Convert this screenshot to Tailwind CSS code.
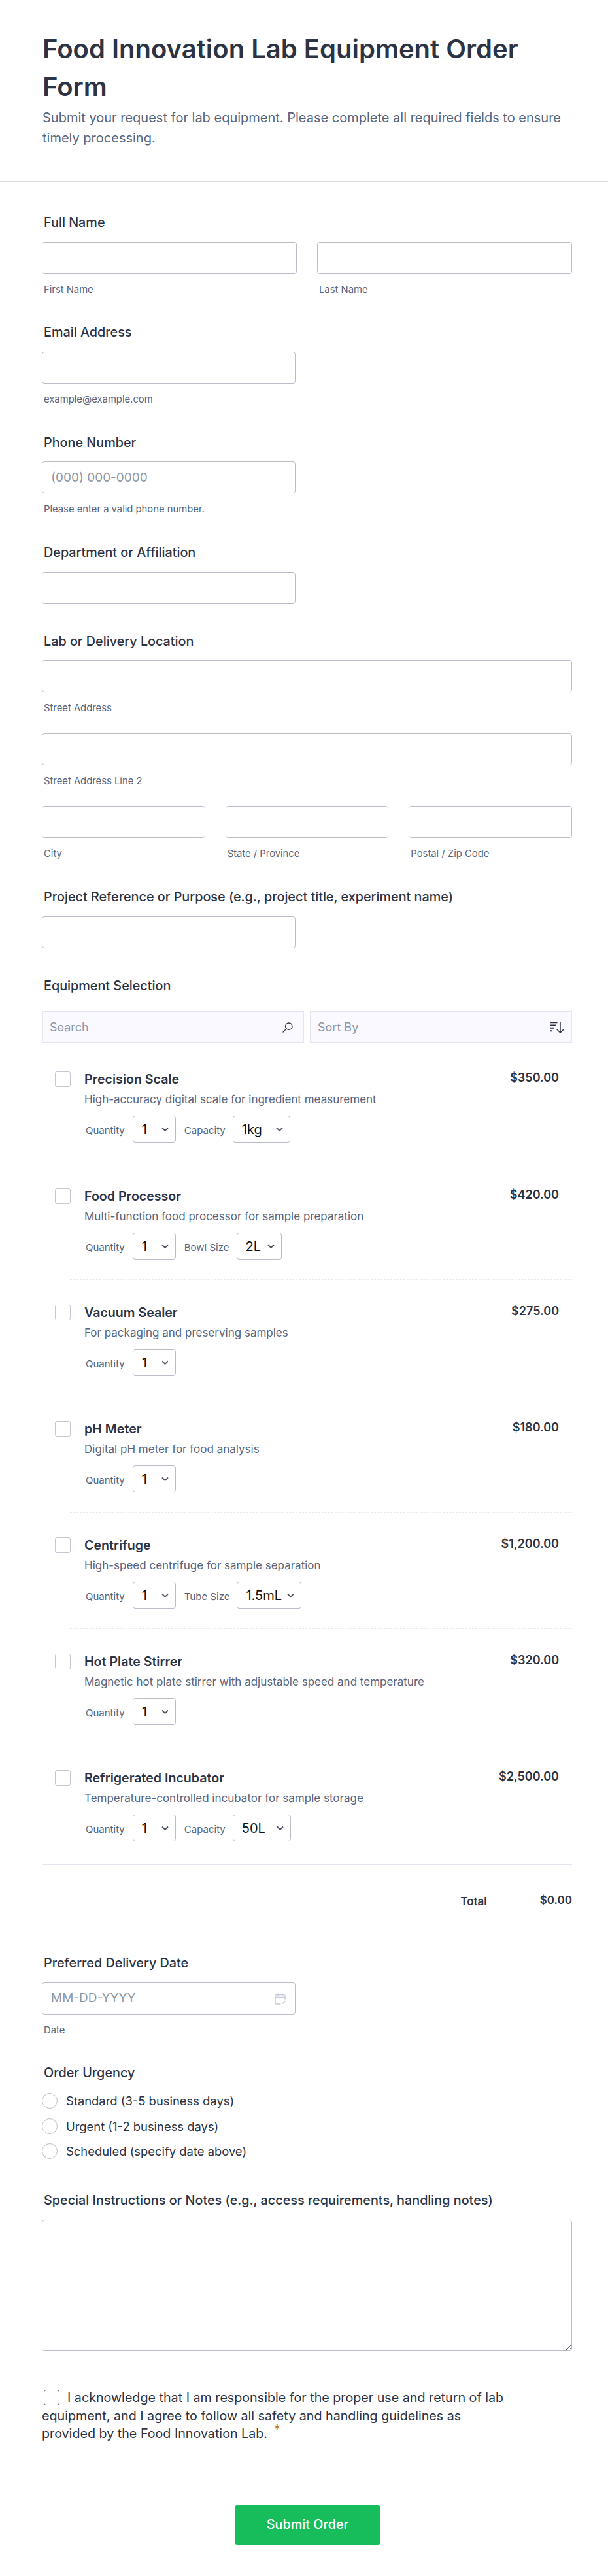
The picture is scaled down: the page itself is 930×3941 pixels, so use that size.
<!DOCTYPE html>
<html lang="en">
<head>
    <meta charset="UTF-8">
    <meta name="viewport" content="width=device-width, initial-scale=1.0">
    <title>Food Innovation Lab Equipment Order Form</title>
    <script src="https://cdn.jsdelivr.net/npm/@tailwindcss/browser@4"></script>
</head>
<body class="bg-white font-['Inter',sans-serif] text-[#2c3345]">
    <!-- Header -->
    <header class="h-[278px] border-b border-[#d8dae9] pl-[65px] pr-[60px] pt-[46px]">
        <h1 class="text-[40px] leading-[58px] font-semibold">Food Innovation Lab Equipment Order Form</h1>
        <p class="mt-[3px] text-[20px] leading-[31px] text-[#57647e]">Submit your request for lab equipment. Please complete all required fields to ensure timely processing.</p>
    </header>

    <main class="pl-[64px] pr-[55px]">
        <!-- Full Name -->
        <section class="h-[196px] pt-[50px]">
            <h2 class="ml-[3px] h-[24px] text-[19.8px] leading-[24px] font-medium">Full Name</h2>
            <div class="mt-[18px] grid grid-cols-2 gap-[31px]">
                <div>
                    <input class="block h-[49px] w-full rounded-[4px] border border-[#b8bdc9] bg-white">
                    <p class="ml-[3px] mt-[15px] text-[14.8px] leading-[18px] text-[#57647e]">First Name</p>
                </div>
                <div>
                    <input class="block h-[49px] w-full rounded-[4px] border border-[#b8bdc9] bg-white">
                    <p class="ml-[3px] mt-[15px] text-[14.8px] leading-[18px] text-[#57647e]">Last Name</p>
                </div>
            </div>
        </section>

        <!-- Email -->
        <section class="h-[168px] pt-[22px]">
            <h2 class="ml-[3px] h-[24px] text-[19.8px] leading-[24px] font-medium">Email Address</h2>
            <input class="mt-[18px] block h-[49px] w-[388px] rounded-[4px] border border-[#b8bdc9] bg-white">
            <p class="ml-[3px] mt-[15px] text-[14.8px] leading-[18px] text-[#57647e]">example@example.com</p>
        </section>

        <!-- Phone -->
        <section class="h-[168px] pt-[23px]">
            <h2 class="ml-[3px] h-[24px] text-[19.8px] leading-[24px] font-medium">Phone Number</h2>
            <input placeholder="(000) 000-0000" class="mt-[17px] block h-[49px] w-[388px] rounded-[4px] border border-[#b8bdc9] bg-white px-[13px] text-[19px] placeholder:text-[#8d97a8]">
            <p class="ml-[3px] mt-[15px] text-[14.8px] leading-[18px] text-[#57647e]">Please enter a valid phone number.</p>
        </section>

        <!-- Department -->
        <section class="h-[136px] pt-[23px]">
            <h2 class="ml-[3px] h-[24px] text-[19.8px] leading-[24px] font-medium">Department or Affiliation</h2>
            <input class="mt-[18px] block h-[49px] w-[388px] rounded-[4px] border border-[#b8bdc9] bg-white">
        </section>

        <!-- Location -->
        <section class="h-[391px] pt-[23px]">
            <h2 class="ml-[3px] h-[24px] text-[19.8px] leading-[24px] font-medium">Lab or Delivery Location</h2>
            <input class="mt-[17px] block h-[49px] w-full rounded-[4px] border border-[#b8bdc9] bg-white">
            <p class="ml-[3px] mt-[15px] text-[14.8px] leading-[18px] text-[#57647e]">Street Address</p>
            <input class="mt-[30px] block h-[49px] w-full rounded-[4px] border border-[#b8bdc9] bg-white">
            <p class="ml-[3px] mt-[15px] text-[14.8px] leading-[18px] text-[#57647e]">Street Address Line 2</p>
            <div class="mt-[29px] grid grid-cols-3 gap-[31px]">
                <div>
                    <input class="block h-[49px] w-full rounded-[4px] border border-[#b8bdc9] bg-white">
                    <p class="ml-[3px] mt-[15px] text-[14.8px] leading-[18px] text-[#57647e]">City</p>
                </div>
                <div>
                    <input class="block h-[49px] w-full rounded-[4px] border border-[#b8bdc9] bg-white">
                    <p class="ml-[3px] mt-[15px] text-[14.8px] leading-[18px] text-[#57647e]">State / Province</p>
                </div>
                <div>
                    <input class="block h-[49px] w-full rounded-[4px] border border-[#b8bdc9] bg-white">
                    <p class="ml-[3px] mt-[15px] text-[14.8px] leading-[18px] text-[#57647e]">Postal / Zip Code</p>
                </div>
            </div>
        </section>

        <!-- Project -->
        <section class="h-[136px] pt-[23px]">
            <h2 class="ml-[3px] h-[24px] text-[19.8px] leading-[24px] font-medium">Project Reference or Purpose (e.g., project title, experiment name)</h2>
            <input class="mt-[18px] block h-[49px] w-[388px] rounded-[4px] border border-[#b8bdc9] bg-white">
        </section>

        <!-- Equipment -->
        <section class="pt-[23px]">
            <h2 class="ml-[3px] h-[24px] text-[19.8px] leading-[24px] font-medium">Equipment Selection</h2>
            <div class="mt-[27px] grid grid-cols-2 gap-[9px]">
                <div class="flex h-[49px] items-center justify-between border-2 border-[#e3e5f0] bg-[#f9f9ff] pl-[10px] pr-[15px]">
                    <span class="text-[18px] text-[#8d97a8]">Search</span>
                    <svg class="h-[16px] w-[16px]" viewBox="0 0 16 16" fill="none" stroke="#2c3345" stroke-width="1.3" stroke-linecap="round"><circle cx="9.8" cy="6.2" r="5.2"/><path d="M6 10L1 15"/></svg>
                </div>
                <div class="flex h-[49px] items-center justify-between border-2 border-[#e3e5f0] bg-[#f9f9ff] pl-[10px] pr-[11px]">
                    <span class="text-[18px] text-[#8d97a8]">Sort By</span>
                    <svg class="h-[18px] w-[20px]" viewBox="0 0 20 18" fill="none" stroke="#2c3345"><path d="M0 1.2H10.5M0 5.5H8M0 9.8H5M0 14.2H2.5" stroke-width="2"/><path d="M15 1V17M10 12L15 17L20 12" stroke-width="1.5" stroke-linecap="round" stroke-linejoin="round"/></svg>
                </div>
            </div>

            <!-- Products -->
            <div class="mt-[5px]">
                <div class="h-[178px] pl-[20px] pr-[20px] pt-[38px]">
                    <div class="flex">
                        <span class="h-[24px] w-[24px] shrink-0 rounded-[3px] border border-[#c3c8d4]"></span>
                        <div class="ml-[21px] flex-1">
                            <div class="flex justify-between"><span class="text-[19.6px] leading-[24px] font-semibold">Precision Scale</span><span class="-mt-[2px] text-[18px] leading-[24px] font-semibold">$350.00</span></div>
                            <p class="mt-[7px] text-[17px] leading-[24px] text-[#57647e]">High-accuracy digital scale for ingredient measurement</p>
                            <div class="mt-[13px] flex items-center text-[15px] text-[#57647e]">
                                <span class="ml-[2px] mt-[5px]">Quantity</span>
                                <span class="ml-[12px] flex h-[41px] w-[66px] items-center justify-between rounded-[4px] border border-[#b8bdc9] pl-[13px] pr-[10px] text-[20px] text-[#111]">1<svg class="h-[8px] w-[11px]" viewBox="0 0 11 8" fill="none" stroke="#4b5563" stroke-width="1.8"><path d="M1 1.5L5.5 6L10 1.5"/></svg></span>
                                <span class="ml-[13px] mt-[5px]">Capacity</span>
                                <span class="ml-[11px] flex h-[41px] w-[88px] items-center justify-between rounded-[4px] border border-[#b8bdc9] pl-[13px] pr-[10px] text-[20px] text-[#111]">1kg<svg class="h-[8px] w-[11px]" viewBox="0 0 11 8" fill="none" stroke="#4b5563" stroke-width="1.8"><path d="M1 1.5L5.5 6L10 1.5"/></svg></span>
                            </div>
                        </div>
                    </div>
                </div>
                <div class="ml-[43px] border-t border-dashed border-[#e8eaf3]"></div>
                <div class="h-[177px] pl-[20px] pr-[20px] pt-[38px]">
                    <div class="flex">
                        <span class="h-[24px] w-[24px] shrink-0 rounded-[3px] border border-[#c3c8d4]"></span>
                        <div class="ml-[21px] flex-1">
                            <div class="flex justify-between"><span class="text-[19.6px] leading-[24px] font-semibold">Food Processor</span><span class="-mt-[2px] text-[18px] leading-[24px] font-semibold">$420.00</span></div>
                            <p class="mt-[7px] text-[17px] leading-[24px] text-[#57647e]">Multi-function food processor for sample preparation</p>
                            <div class="mt-[13px] flex items-center text-[15px] text-[#57647e]">
                                <span class="ml-[2px] mt-[5px]">Quantity</span>
                                <span class="ml-[12px] flex h-[41px] w-[66px] items-center justify-between rounded-[4px] border border-[#b8bdc9] pl-[13px] pr-[10px] text-[20px] text-[#111]">1<svg class="h-[8px] w-[11px]" viewBox="0 0 11 8" fill="none" stroke="#4b5563" stroke-width="1.8"><path d="M1 1.5L5.5 6L10 1.5"/></svg></span>
                                <span class="ml-[13px] mt-[5px]">Bowl Size</span>
                                <span class="ml-[11px] flex h-[41px] w-[69px] items-center justify-between rounded-[4px] border border-[#b8bdc9] pl-[13px] pr-[10px] text-[20px] text-[#111]">2L<svg class="h-[8px] w-[11px]" viewBox="0 0 11 8" fill="none" stroke="#4b5563" stroke-width="1.8"><path d="M1 1.5L5.5 6L10 1.5"/></svg></span>
                            </div>
                        </div>
                    </div>
                </div>
                <div class="ml-[43px] border-t border-dashed border-[#e8eaf3]"></div>
                <div class="h-[177px] pl-[20px] pr-[20px] pt-[38px]">
                    <div class="flex">
                        <span class="h-[24px] w-[24px] shrink-0 rounded-[3px] border border-[#c3c8d4]"></span>
                        <div class="ml-[21px] flex-1">
                            <div class="flex justify-between"><span class="text-[19.6px] leading-[24px] font-semibold">Vacuum Sealer</span><span class="-mt-[2px] text-[18px] leading-[24px] font-semibold">$275.00</span></div>
                            <p class="mt-[7px] text-[17px] leading-[24px] text-[#57647e]">For packaging and preserving samples</p>
                            <div class="mt-[13px] flex items-center text-[15px] text-[#57647e]">
                                <span class="ml-[2px] mt-[5px]">Quantity</span>
                                <span class="ml-[12px] flex h-[41px] w-[66px] items-center justify-between rounded-[4px] border border-[#b8bdc9] pl-[13px] pr-[10px] text-[20px] text-[#111]">1<svg class="h-[8px] w-[11px]" viewBox="0 0 11 8" fill="none" stroke="#4b5563" stroke-width="1.8"><path d="M1 1.5L5.5 6L10 1.5"/></svg></span>
                            </div>
                        </div>
                    </div>
                </div>
                <div class="ml-[43px] border-t border-dashed border-[#e8eaf3]"></div>
                <div class="h-[177px] pl-[20px] pr-[20px] pt-[38px]">
                    <div class="flex">
                        <span class="h-[24px] w-[24px] shrink-0 rounded-[3px] border border-[#c3c8d4]"></span>
                        <div class="ml-[21px] flex-1">
                            <div class="flex justify-between"><span class="text-[19.6px] leading-[24px] font-semibold">pH Meter</span><span class="-mt-[2px] text-[18px] leading-[24px] font-semibold">$180.00</span></div>
                            <p class="mt-[7px] text-[17px] leading-[24px] text-[#57647e]">Digital pH meter for food analysis</p>
                            <div class="mt-[13px] flex items-center text-[15px] text-[#57647e]">
                                <span class="ml-[2px] mt-[5px]">Quantity</span>
                                <span class="ml-[12px] flex h-[41px] w-[66px] items-center justify-between rounded-[4px] border border-[#b8bdc9] pl-[13px] pr-[10px] text-[20px] text-[#111]">1<svg class="h-[8px] w-[11px]" viewBox="0 0 11 8" fill="none" stroke="#4b5563" stroke-width="1.8"><path d="M1 1.5L5.5 6L10 1.5"/></svg></span>
                            </div>
                        </div>
                    </div>
                </div>
                <div class="ml-[43px] border-t border-dashed border-[#e8eaf3]"></div>
                <div class="h-[177px] pl-[20px] pr-[20px] pt-[38px]">
                    <div class="flex">
                        <span class="h-[24px] w-[24px] shrink-0 rounded-[3px] border border-[#c3c8d4]"></span>
                        <div class="ml-[21px] flex-1">
                            <div class="flex justify-between"><span class="text-[19.6px] leading-[24px] font-semibold">Centrifuge</span><span class="-mt-[2px] text-[18px] leading-[24px] font-semibold">$1,200.00</span></div>
                            <p class="mt-[7px] text-[17px] leading-[24px] text-[#57647e]">High-speed centrifuge for sample separation</p>
                            <div class="mt-[13px] flex items-center text-[15px] text-[#57647e]">
                                <span class="ml-[2px] mt-[5px]">Quantity</span>
                                <span class="ml-[12px] flex h-[41px] w-[66px] items-center justify-between rounded-[4px] border border-[#b8bdc9] pl-[13px] pr-[10px] text-[20px] text-[#111]">1<svg class="h-[8px] w-[11px]" viewBox="0 0 11 8" fill="none" stroke="#4b5563" stroke-width="1.8"><path d="M1 1.5L5.5 6L10 1.5"/></svg></span>
                                <span class="ml-[13px] mt-[5px]">Tube Size</span>
                                <span class="ml-[11px] flex h-[41px] w-[99px] items-center justify-between rounded-[4px] border border-[#b8bdc9] pl-[13px] pr-[10px] text-[20px] text-[#111]">1.5mL<svg class="h-[8px] w-[11px]" viewBox="0 0 11 8" fill="none" stroke="#4b5563" stroke-width="1.8"><path d="M1 1.5L5.5 6L10 1.5"/></svg></span>
                            </div>
                        </div>
                    </div>
                </div>
                <div class="ml-[43px] border-t border-dashed border-[#e8eaf3]"></div>
                <div class="h-[177px] pl-[20px] pr-[20px] pt-[38px]">
                    <div class="flex">
                        <span class="h-[24px] w-[24px] shrink-0 rounded-[3px] border border-[#c3c8d4]"></span>
                        <div class="ml-[21px] flex-1">
                            <div class="flex justify-between"><span class="text-[19.6px] leading-[24px] font-semibold">Hot Plate Stirrer</span><span class="-mt-[2px] text-[18px] leading-[24px] font-semibold">$320.00</span></div>
                            <p class="mt-[7px] text-[17px] leading-[24px] text-[#57647e]">Magnetic hot plate stirrer with adjustable speed and temperature</p>
                            <div class="mt-[13px] flex items-center text-[15px] text-[#57647e]">
                                <span class="ml-[2px] mt-[5px]">Quantity</span>
                                <span class="ml-[12px] flex h-[41px] w-[66px] items-center justify-between rounded-[4px] border border-[#b8bdc9] pl-[13px] pr-[10px] text-[20px] text-[#111]">1<svg class="h-[8px] w-[11px]" viewBox="0 0 11 8" fill="none" stroke="#4b5563" stroke-width="1.8"><path d="M1 1.5L5.5 6L10 1.5"/></svg></span>
                            </div>
                        </div>
                    </div>
                </div>
                <div class="ml-[43px] border-t border-dashed border-[#e8eaf3]"></div>
                <div class="h-[183px] border-b border-[#e3e5f0] pl-[20px] pr-[20px] pt-[38px]">
                    <div class="flex">
                        <span class="h-[24px] w-[24px] shrink-0 rounded-[3px] border border-[#c3c8d4]"></span>
                        <div class="ml-[21px] flex-1">
                            <div class="flex justify-between"><span class="text-[19.6px] leading-[24px] font-semibold">Refrigerated Incubator</span><span class="-mt-[2px] text-[18px] leading-[24px] font-semibold">$2,500.00</span></div>
                            <p class="mt-[7px] text-[17px] leading-[24px] text-[#57647e]">Temperature-controlled incubator for sample storage</p>
                            <div class="mt-[13px] flex items-center text-[15px] text-[#57647e]">
                                <span class="ml-[2px] mt-[5px]">Quantity</span>
                                <span class="ml-[12px] flex h-[41px] w-[66px] items-center justify-between rounded-[4px] border border-[#b8bdc9] pl-[13px] pr-[10px] text-[20px] text-[#111]">1<svg class="h-[8px] w-[11px]" viewBox="0 0 11 8" fill="none" stroke="#4b5563" stroke-width="1.8"><path d="M1 1.5L5.5 6L10 1.5"/></svg></span>
                                <span class="ml-[13px] mt-[5px]">Capacity</span>
                                <span class="ml-[11px] flex h-[41px] w-[89px] items-center justify-between rounded-[4px] border border-[#b8bdc9] pl-[13px] pr-[10px] text-[20px] text-[#111]">50L<svg class="h-[8px] w-[11px]" viewBox="0 0 11 8" fill="none" stroke="#4b5563" stroke-width="1.8"><path d="M1 1.5L5.5 6L10 1.5"/></svg></span>
                            </div>
                        </div>
                    </div>
                </div>
            </div>
            <div class="mt-[44px] flex justify-end text-[17px] leading-[24px] font-semibold">
                <span class="mr-[81px]">Total</span><span class="-mt-[2px]">$0.00</span>
            </div>
        </section>

        <!-- Date -->
        <section class="mt-[70px]">
            <h2 class="ml-[3px] h-[24px] text-[19.8px] leading-[24px] font-medium">Preferred Delivery Date</h2>
            <div class="mt-[18px] flex h-[49px] w-[388px] items-center justify-between rounded-[4px] border border-[#b8bdc9] pl-[13px] pr-[14px]">
                <span class="text-[19px] text-[#8d97a8]">MM-DD-YYYY</span>
                <svg class="h-[18px] w-[17px]" viewBox="0 0 17 18" fill="none" stroke="#c3c8d4" stroke-width="1.3" stroke-linecap="round" stroke-linejoin="round"><path d="M16 10V4.5A2 2 0 0 0 14 2.500H3A2 2 0 0 0 1 4.500V15A2 2 0 0 0 3 17H9"/><path d="M1 6.500H16M5 1V4M12 1V4"/><path d="M11.500 14.500L13 16L16 13"/></svg>
            </div>
            <p class="ml-[3px] mt-[15px] text-[14.8px] leading-[18px] text-[#57647e]">Date</p>
        </section>

        <!-- Urgency -->
        <section class="mt-[44px]">
            <h2 class="ml-[3px] h-[24px] text-[19.8px] leading-[24px] font-medium">Order Urgency</h2>
            <div class="mt-[19px] flex flex-col gap-[14.500px] text-[18.4px] leading-[24px]">
                <label class="flex items-center gap-[13px]"><span class="h-[24px] w-[24px] rounded-full border border-[#b8bdc9]"></span>Standard (3-5 business days)</label>
                <label class="flex items-center gap-[13px]"><span class="h-[24px] w-[24px] rounded-full border border-[#b8bdc9]"></span>Urgent (1-2 business days)</label>
                <label class="flex items-center gap-[13px]"><span class="h-[24px] w-[24px] rounded-full border border-[#b8bdc9]"></span>Scheduled (specify date above)</label>
            </div>
        </section>

        <!-- Notes -->
        <section class="mt-[51px]">
            <h2 class="ml-[3px] h-[24px] text-[19.8px] leading-[24px] font-medium">Special Instructions or Notes (e.g., access requirements, handling notes)</h2>
            <textarea class="mt-[18px] block h-[201px] w-full rounded-[4px] border border-[#b8bdc9] bg-white"></textarea>
        </section>

        <!-- Acknowledge -->
        <section class="mt-[58px] w-[714px] text-[19.7px] leading-[27.500px]">
            <span class="ml-[3px] mr-[12px] inline-block h-[24px] w-[24px] rounded-[3px] border-[1.5px] border-[#2c3345] align-[-5px]"></span>I acknowledge that I am responsible for the proper use and return of lab equipment, and I agree to follow all safety and handling guidelines as provided by the Food Innovation Lab. <span class="relative -top-[6px] ml-[4px] font-semibold text-[#c8702a]">*</span>
        </section>
    </main>

    <!-- Footer -->
    <footer class="mt-[57px] h-[147px] border-t border-[#e3e5f0] pl-[359px] pt-[37px]">
        <button class="block h-[60px] w-[223px] rounded-[4px] bg-[#18bd5b] text-[19.8px] font-medium text-white">Submit Order</button>
    </footer>
</body>
</html>
